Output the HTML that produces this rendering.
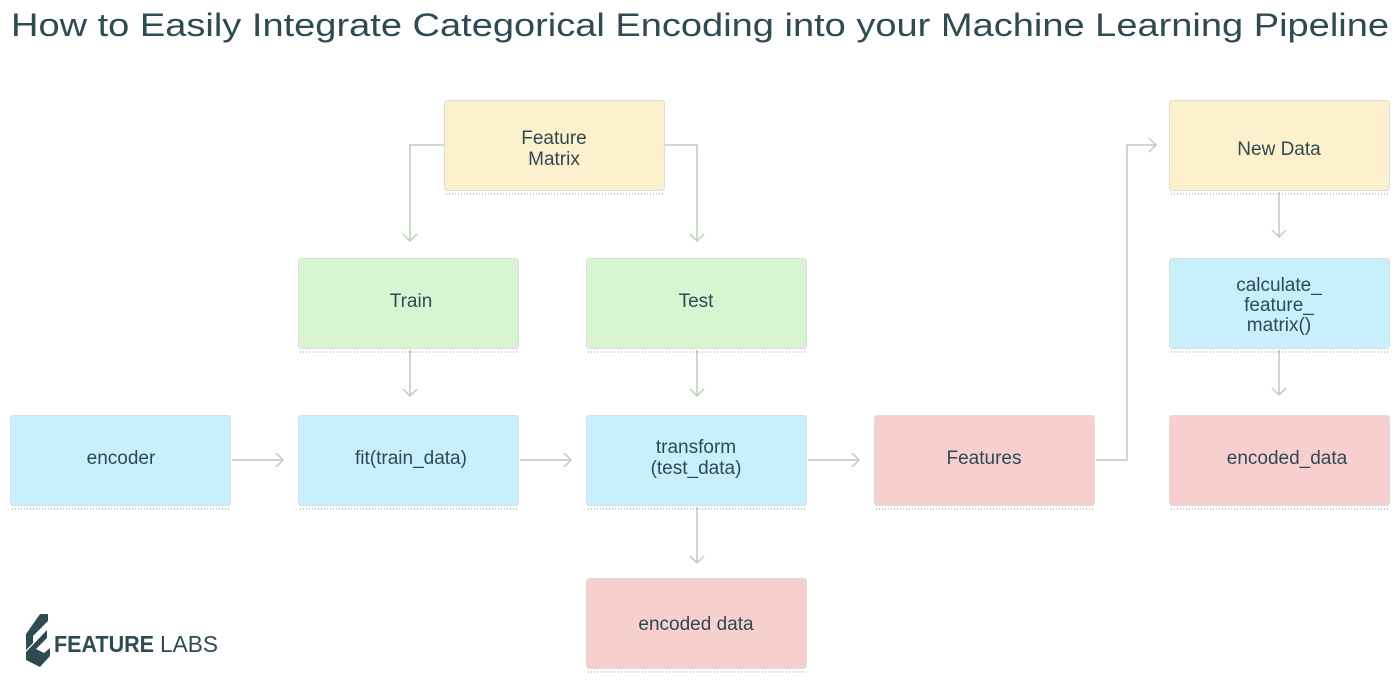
<!DOCTYPE html>
<html><head><meta charset="utf-8"><style>
html,body{margin:0;padding:0;background:#fff;width:1400px;height:684px;overflow:hidden}
</style></head><body>
<svg width="1400" height="684" xmlns="http://www.w3.org/2000/svg" font-family="Liberation Sans, sans-serif">
<text x="11" y="36" font-size="32" fill="#2e4a52" textLength="1378" lengthAdjust="spacingAndGlyphs">How to Easily Integrate Categorical Encoding into your Machine Learning Pipeline</text>
<g fill="none" stroke="#bccdb9" stroke-width="1.5">
<path d="M444 145H410V240M664 145H697V240"/>
<path d="M403 234l7 7 7-7M690 234l7 7 7-7"/>
<path d="M410 350V395M697 350V395M403 389l7 7 7-7M690 389l7 7 7-7"/>
<path d="M697 507V562M690 556l7 7 7-7"/>
<path d="M232 460H282M276 453l7 7-7 7"/>
<path d="M520 460H570M564 453l7 7-7 7"/>
<path d="M808 460H858M852 453l7 7-7 7"/>
<path d="M1096 460H1127V145H1155M1149 138l7 7-7 7"/>
<path d="M1279 192V236M1272 230l7 7 7-7M1279 350V394M1272 388l7 7 7-7"/>
</g>
<g stroke="#999" stroke-width="1" stroke-dasharray="1 2">
<path d="M446 194H664M1171 194H1389M300 352H518M588 352H806M1171 352H1389M12 509H230M300 509H518M588 509H806M876 509H1094M1171 509H1389M588 672H806"/>
</g>
<g stroke="#dcdcdc" stroke-width="1">
<rect x="444.5" y="100.5" width="220" height="90" rx="3" fill="#fdf0cc"/>
<rect x="1169.5" y="100.5" width="220" height="90" rx="3" fill="#fdf0cc"/>
<rect x="298.5" y="258.5" width="220" height="90" rx="3" fill="#d8f5d2"/>
<rect x="586.5" y="258.5" width="220" height="90" rx="3" fill="#d8f5d2"/>
<rect x="1169.5" y="258.5" width="220" height="90" rx="3" fill="#c8effc"/>
<rect x="10.5" y="415.5" width="220" height="90" rx="3" fill="#c8effc"/>
<rect x="298.5" y="415.5" width="220" height="90" rx="3" fill="#c8effc"/>
<rect x="586.5" y="415.5" width="220" height="90" rx="3" fill="#c8effc"/>
<rect x="874.5" y="415.5" width="220" height="90" rx="3" fill="#f7cfcf"/>
<rect x="1169.5" y="415.5" width="220" height="90" rx="3" fill="#f7cfcf"/>
<rect x="586.5" y="578.5" width="220" height="90" rx="3" fill="#f7cfcf"/>
</g>
<g font-size="19" fill="#2e4a52" text-anchor="middle">
<text x="554" y="144">Feature</text><text x="554" y="165">Matrix</text>
<text x="1279" y="155">New Data</text>
<text x="411" y="307">Train</text>
<text x="696" y="307">Test</text>
<text x="1279" y="291">calculate_</text><text x="1279" y="311">feature_</text><text x="1279" y="331">matrix()</text>
<text x="121" y="464">encoder</text>
<text x="411" y="464">fit(train_data)</text>
<text x="696" y="453">transform</text><text x="696" y="474">(test_data)</text>
<text x="984" y="464">Features</text>
<text x="1287" y="464">encoded_data</text>
<text x="696" y="630">encoded data</text>
</g>
<g fill="#2e4a52">
<path d="M40 614L48 614L48 621L33 636L33 643L26 650L26 634Z"/>
<path d="M47 630L47 638L36 649L44 653L50 648L50 656L40 667L26 660L26 652Z"/>
<text x="54" y="652" font-size="23" font-weight="bold" textLength="100" lengthAdjust="spacingAndGlyphs">FEATURE</text>
<text x="160" y="652" font-size="23" textLength="58" lengthAdjust="spacingAndGlyphs">LABS</text>
</g>
</svg>
</body></html>
